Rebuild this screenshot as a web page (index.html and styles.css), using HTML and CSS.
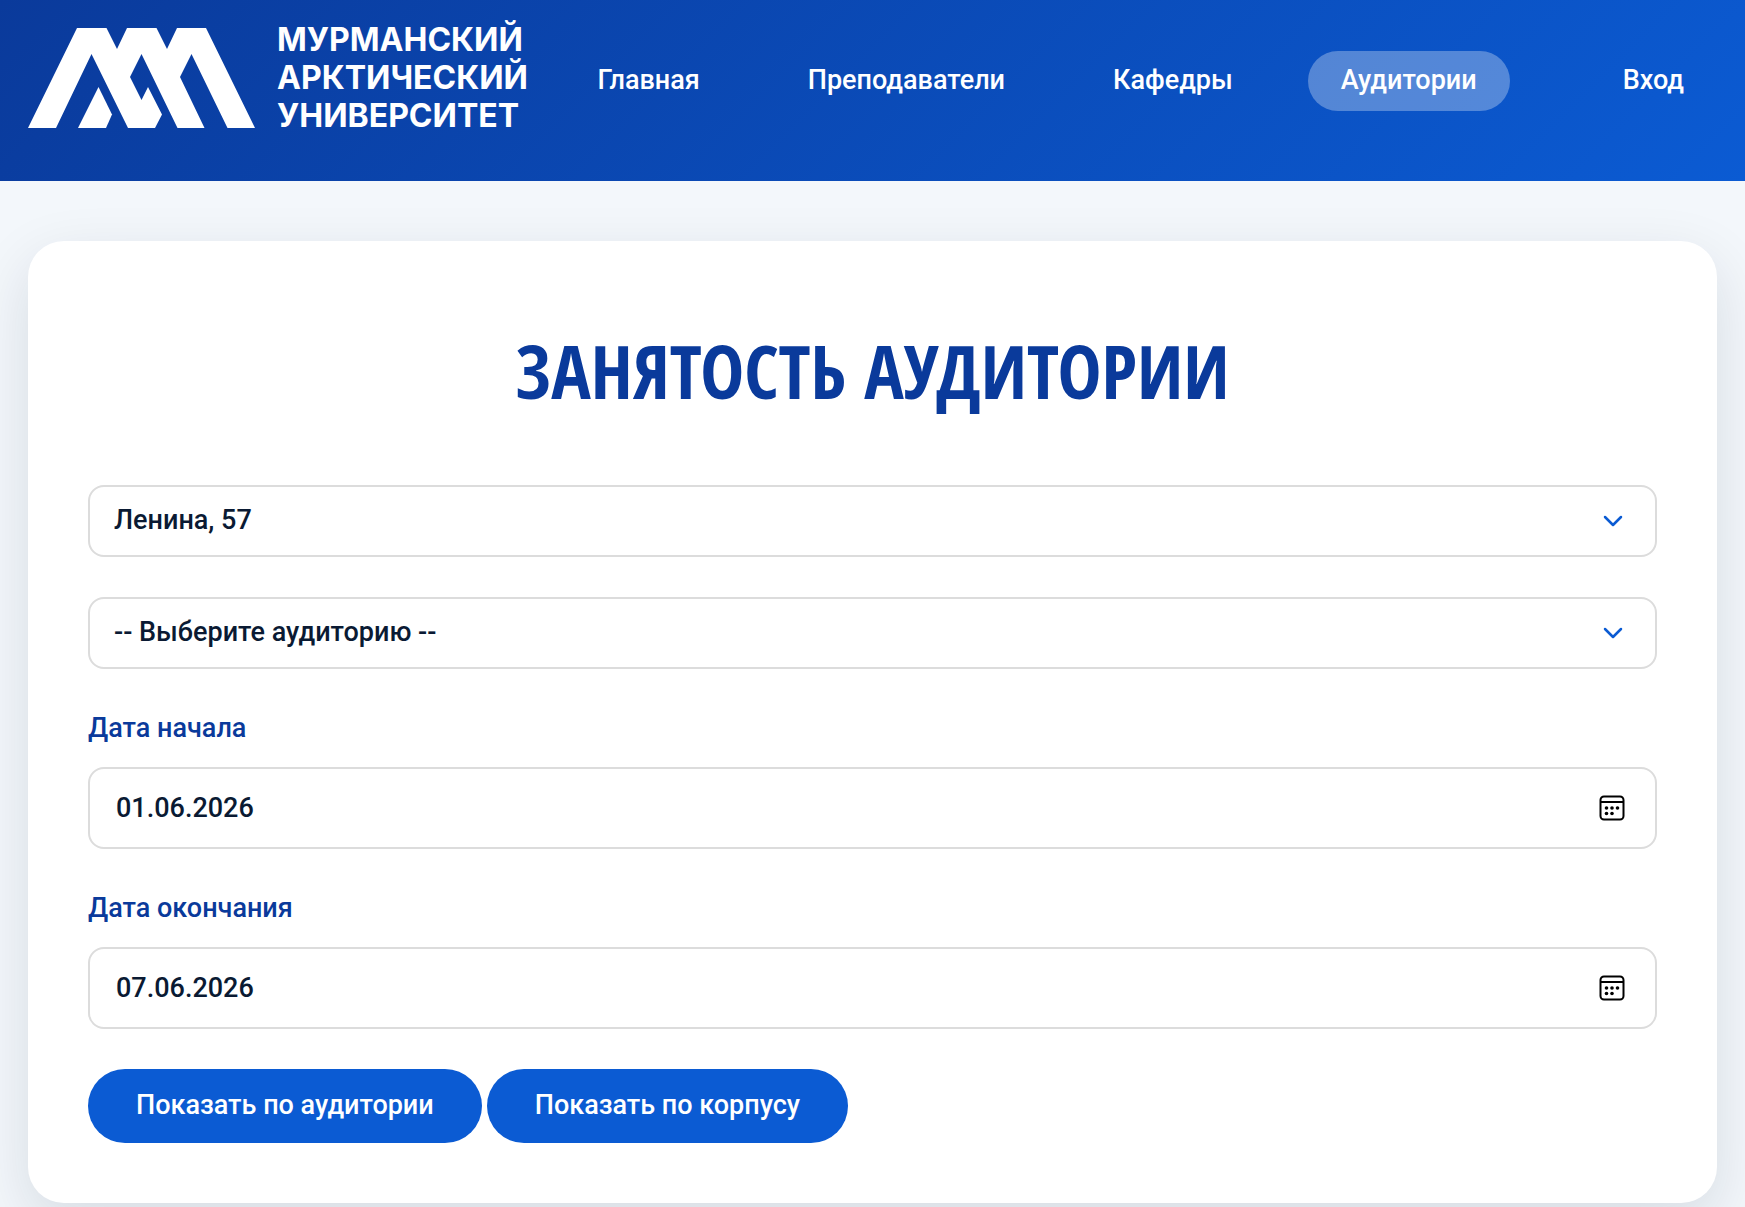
FILE: index.html
```html
<!DOCTYPE html>
<html lang="ru">
<head>
  <meta charset="utf-8">
  <meta name="viewport" content="width=device-width, initial-scale=1">
  <title>Занятость аудитории</title>
  <link rel="stylesheet" href="styles.css">
</head>
<body>
  <header class="header">
    <a class="logo" href="#">
      <svg class="logo-mark" viewBox="0 0 227 100" aria-hidden="true">
        <path d="M0 100 49 0H78.5L89 21 99 0H128.5L139 21 149 0H178L227 100H199.5L163.5 26 152 49 176.5 100H149.5L113.5 26 102 49 113.5 72 120 59 134 86.5 127 100H100L63.5 26 28 100Z"/>
        <path d="M50 100 70.5 59 84 86.5 78 100Z"/>
      </svg>
      <span class="logo-text">МУРМАНСКИЙ<br>АРКТИЧЕСКИЙ<br>УНИВЕРСИТЕТ</span>
    </a>
    <nav class="nav">
      <a class="nav-link" href="#">Главная</a>
      <a class="nav-link" href="#">Преподаватели</a>
      <a class="nav-link" href="#">Кафедры</a>
      <a class="nav-link nav-link-active" href="#" aria-current="page">Аудитории</a>
      <a class="nav-link nav-login" href="#">Вход</a>
    </nav>
  </header>

  <main class="card">
    <h1 class="title">ЗАНЯТОСТЬ АУДИТОРИИ</h1>
    <form class="form">
      <div class="control">
        <select class="field select" aria-label="Корпус">
          <option>Ленина, 57</option>
        </select>
        <svg class="chevron" viewBox="0 0 24 24" aria-hidden="true"><path d="M4 8l8 8 8-8"/></svg>
      </div>
      <div class="control">
        <select class="field select" aria-label="Аудитория">
          <option>-- Выберите аудиторию --</option>
        </select>
        <svg class="chevron" viewBox="0 0 24 24" aria-hidden="true"><path d="M4 8l8 8 8-8"/></svg>
      </div>
      <div class="group">
        <label class="label" for="date-start">Дата начала</label>
        <div class="control">
          <input class="field date" id="date-start" type="text" inputmode="numeric" value="01.06.2026">
          <button class="picker" type="button" aria-label="Открыть календарь">
            <svg class="calendar" viewBox="0 0 26 26" aria-hidden="true">
              <rect x="1.5" y="1.5" width="23" height="23" rx="3.5"/>
              <path d="M1.5 7H24.5"/>
              <g class="dots"><circle cx="7.5" cy="13" r="1.8"/><circle cx="13" cy="13" r="1.8"/><circle cx="18.5" cy="13" r="1.8"/><circle cx="7.5" cy="18.5" r="1.8"/><circle cx="13" cy="18.5" r="1.8"/></g>
            </svg>
          </button>
        </div>
      </div>
      <div class="group">
        <label class="label" for="date-end">Дата окончания</label>
        <div class="control">
          <input class="field date" id="date-end" type="text" inputmode="numeric" value="07.06.2026">
          <button class="picker" type="button" aria-label="Открыть календарь">
            <svg class="calendar" viewBox="0 0 26 26" aria-hidden="true">
              <rect x="1.5" y="1.5" width="23" height="23" rx="3.5"/>
              <path d="M1.5 7H24.5"/>
              <g class="dots"><circle cx="7.5" cy="13" r="1.8"/><circle cx="13" cy="13" r="1.8"/><circle cx="18.5" cy="13" r="1.8"/><circle cx="7.5" cy="18.5" r="1.8"/><circle cx="13" cy="18.5" r="1.8"/></g>
            </svg>
          </button>
        </div>
      </div>
      <div class="actions">
        <button class="button" type="button">Показать по аудитории</button>
        <button class="button" type="button">Показать по корпусу</button>
      </div>
    </form>
  </main>
</body>
</html>
```
FILE: styles.css
```css
:root {
  --navy: #0a3a9b;
  --blue: #0b5bd3;
  --ink: #0a1a33;
  --border: #dcdcdc;
}

* {
  box-sizing: border-box;
}

body {
  margin: 0;
  background: #f3f7fb;
  color: var(--ink);
  font: 500 27px/36px Roboto, "Liberation Sans", sans-serif;
}

.header {
  display: flex;
  align-items: flex-start;
  justify-content: space-between;
  padding: 21px 28px 46px;
  background: linear-gradient(135deg, var(--navy), var(--blue));
}

.logo {
  display: flex;
  gap: 22px;
  color: #fff;
  text-decoration: none;
}

.logo-mark {
  width: 227px;
  height: 100px;
  margin-top: 7px;
  fill: currentColor;
}

.logo-text {
  font: 700 32px/38px Inter, "Noto Sans", sans-serif;
}

.nav {
  display: flex;
  gap: 42px;
  margin-top: 30px;
}

.nav-link {
  padding: 11px 33px 13px;
  border-radius: 30px;
  color: #fff;
  text-decoration: none;
}

.nav-link-active {
  background: rgba(255, 255, 255, 0.3);
}

.nav-login {
  margin-left: 38px;
}

.card {
  margin: 60px 28px;
  padding: 60px;
  border-radius: 36px;
  background: #fff;
  box-shadow: 0 20px 60px rgba(10, 26, 51, 0.12);
}

.title {
  margin: 0 0 44px;
  color: var(--navy);
  font: 800 74px/140px "Open Sans Condensed", "Roboto Condensed", "Open Sans", sans-serif;
  text-align: center;
}

.form {
  display: flex;
  flex-direction: column;
  gap: 40px;
}

.group {
  display: flex;
  flex-direction: column;
  gap: 20px;
}

.label {
  line-height: 38px;
  color: var(--navy);
}

.control {
  position: relative;
}

.field {
  display: block;
  width: 100%;
  padding: 0 26px;
  border: 2px solid var(--border);
  border-radius: 16px;
  background: #fff;
  color: inherit;
  font: inherit;
}

.select {
  height: 72px;
  padding: 0 24px 2px;
  appearance: none;
}

.date {
  height: 82px;
}

.chevron {
  position: absolute;
  top: 24px;
  right: 32px;
  width: 24px;
  height: 24px;
  fill: none;
  stroke: var(--blue);
  stroke-width: 2.5;
  stroke-linecap: round;
  stroke-linejoin: round;
  pointer-events: none;
}

.picker {
  position: absolute;
  top: 28px;
  right: 32px;
  padding: 0;
  border: 0;
  background: none;
}

.calendar {
  display: block;
  width: 26px;
  height: 26px;
  fill: none;
  stroke: #000;
  stroke-width: 2;
}

.dots {
  fill: #000;
  stroke: none;
}

.actions {
  display: flex;
  flex-wrap: wrap;
  gap: 5px;
}

.button {
  padding: 18px 48px 20px;
  border: 0;
  border-radius: 37px;
  background: var(--blue);
  color: #fff;
  font: inherit;
}
```
